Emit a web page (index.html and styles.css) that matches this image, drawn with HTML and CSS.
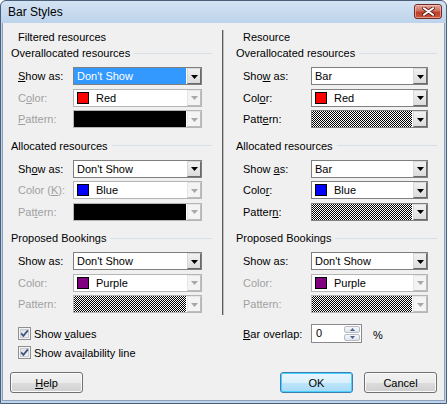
FILE: index.html
```html
<!DOCTYPE html>
<html>
<head>
<meta charset="utf-8">
<title>Bar Styles</title>
<link rel="stylesheet" href="styles.css">
</head>
<body>
<div class="window">
  <div class="titlebar">
    <span class="title">Bar Styles</span>
    <span class="close"><svg width="13" height="9" viewBox="0 0 13 9"><path d="M2 1.2 L11 7.8 M11 1.2 L2 7.8" stroke="#5b1b17" stroke-width="3.6" stroke-linecap="round"/><path d="M2 1.2 L11 7.8 M11 1.2 L2 7.8" stroke="#fff" stroke-width="2" stroke-linecap="round"/></svg></span>
  </div>
  <div class="client">
    <div class="columns">
      <div class="col col-left">
        <div class="col-title">Filtered resources</div>
        <div class="group">
          <div class="group-head"><span>Overallocated resources</span></div>
          <div class="row">
            <span class="lbl"><u>S</u>how as:</span>
            <div class="combo"><span class="val sel">Don't Show</span><span class="arrow"><svg width="7" height="4" viewBox="0 0 7 4"><polygon points="0,0 7,0 3.5,4"/></svg></span></div>
          </div>
          <div class="row">
            <span class="lbl dis">C<u>o</u>lor:</span>
            <div class="combo disabled"><span class="val"><span class="swatch red"></span>Red</span><span class="arrow"><svg width="7" height="4" viewBox="0 0 7 4"><polygon points="0,0 7,0 3.5,4"/></svg></span></div>
          </div>
          <div class="row">
            <span class="lbl dis"><u>P</u>attern:</span>
            <div class="combo disabled"><span class="val solid"></span><span class="arrow"><svg width="7" height="4" viewBox="0 0 7 4"><polygon points="0,0 7,0 3.5,4"/></svg></span></div>
          </div>
        </div>
        <div class="group">
          <div class="group-head"><span>Allocated resources</span></div>
          <div class="row">
            <span class="lbl">Sh<u>o</u>w as:</span>
            <div class="combo"><span class="val">Don't Show</span><span class="arrow"><svg width="7" height="4" viewBox="0 0 7 4"><polygon points="0,0 7,0 3.5,4"/></svg></span></div>
          </div>
          <div class="row">
            <span class="lbl dis">Color (<u>K</u>):</span>
            <div class="combo disabled"><span class="val"><span class="swatch blue"></span>Blue</span><span class="arrow"><svg width="7" height="4" viewBox="0 0 7 4"><polygon points="0,0 7,0 3.5,4"/></svg></span></div>
          </div>
          <div class="row">
            <span class="lbl dis">Pat<u>t</u>ern:</span>
            <div class="combo disabled"><span class="val solid"></span><span class="arrow"><svg width="7" height="4" viewBox="0 0 7 4"><polygon points="0,0 7,0 3.5,4"/></svg></span></div>
          </div>
        </div>
        <div class="group">
          <div class="group-head"><span>Proposed Bookings</span></div>
          <div class="row">
            <span class="lbl">Show as:</span>
            <div class="combo"><span class="val">Don't Show</span><span class="arrow"><svg width="7" height="4" viewBox="0 0 7 4"><polygon points="0,0 7,0 3.5,4"/></svg></span></div>
          </div>
          <div class="row">
            <span class="lbl dis">Color:</span>
            <div class="combo disabled"><span class="val"><span class="swatch purple"></span>Purple</span><span class="arrow"><svg width="7" height="4" viewBox="0 0 7 4"><polygon points="0,0 7,0 3.5,4"/></svg></span></div>
          </div>
          <div class="row">
            <span class="lbl dis">Pattern:</span>
            <div class="combo disabled"><span class="val checker"></span><span class="arrow"><svg width="7" height="4" viewBox="0 0 7 4"><polygon points="0,0 7,0 3.5,4"/></svg></span></div>
          </div>
        </div>
      </div>
      <div class="sep"></div>
      <div class="col col-right">
        <div class="col-title">Resource</div>
        <div class="group">
          <div class="group-head"><span>Overallocated resources</span></div>
          <div class="row">
            <span class="lbl">Sho<u>w</u> as:</span>
            <div class="combo"><span class="val">Bar</span><span class="arrow"><svg width="7" height="4" viewBox="0 0 7 4"><polygon points="0,0 7,0 3.5,4"/></svg></span></div>
          </div>
          <div class="row">
            <span class="lbl">Col<u>o</u>r:</span>
            <div class="combo"><span class="val"><span class="swatch red"></span>Red</span><span class="arrow"><svg width="7" height="4" viewBox="0 0 7 4"><polygon points="0,0 7,0 3.5,4"/></svg></span></div>
          </div>
          <div class="row">
            <span class="lbl">Patt<u>e</u>rn:</span>
            <div class="combo"><span class="val checker"></span><span class="arrow"><svg width="7" height="4" viewBox="0 0 7 4"><polygon points="0,0 7,0 3.5,4"/></svg></span></div>
          </div>
        </div>
        <div class="group">
          <div class="group-head"><span>Allocated resources</span></div>
          <div class="row">
            <span class="lbl">Show <u>a</u>s:</span>
            <div class="combo"><span class="val">Bar</span><span class="arrow"><svg width="7" height="4" viewBox="0 0 7 4"><polygon points="0,0 7,0 3.5,4"/></svg></span></div>
          </div>
          <div class="row">
            <span class="lbl">Colo<u>r</u>:</span>
            <div class="combo"><span class="val"><span class="swatch blue"></span>Blue</span><span class="arrow"><svg width="7" height="4" viewBox="0 0 7 4"><polygon points="0,0 7,0 3.5,4"/></svg></span></div>
          </div>
          <div class="row">
            <span class="lbl">Patter<u>n</u>:</span>
            <div class="combo"><span class="val checker"></span><span class="arrow"><svg width="7" height="4" viewBox="0 0 7 4"><polygon points="0,0 7,0 3.5,4"/></svg></span></div>
          </div>
        </div>
        <div class="group">
          <div class="group-head"><span>Proposed Bookings</span></div>
          <div class="row">
            <span class="lbl">Show as:</span>
            <div class="combo"><span class="val">Don't Show</span><span class="arrow"><svg width="7" height="4" viewBox="0 0 7 4"><polygon points="0,0 7,0 3.5,4"/></svg></span></div>
          </div>
          <div class="row">
            <span class="lbl dis">Color:</span>
            <div class="combo disabled"><span class="val"><span class="swatch purple"></span>Purple</span><span class="arrow"><svg width="7" height="4" viewBox="0 0 7 4"><polygon points="0,0 7,0 3.5,4"/></svg></span></div>
          </div>
          <div class="row">
            <span class="lbl dis">Pattern:</span>
            <div class="combo disabled"><span class="val checker"></span><span class="arrow"><svg width="7" height="4" viewBox="0 0 7 4"><polygon points="0,0 7,0 3.5,4"/></svg></span></div>
          </div>
        </div>
      </div>
    </div>
    <div class="lower">
      <div class="lower-left">
        <div class="check-row"><span class="checkbox"><svg width="13" height="13" viewBox="0 0 13 13"><path d="M3.2 6.4 L5.4 8.9 L9.9 3.4" fill="none" stroke="#3f5686" stroke-width="1.8"/></svg></span><span>Show <u>v</u>alues</span></div>
        <div class="check-row"><span class="checkbox"><svg width="13" height="13" viewBox="0 0 13 13"><path d="M3.2 6.4 L5.4 8.9 L9.9 3.4" fill="none" stroke="#3f5686" stroke-width="1.8"/></svg></span><span>Show ava<u>i</u>lability line</span></div>
      </div>
      <div class="lower-right">
        <span class="lbl"><u>B</u>ar overlap:</span>
        <div class="spinner">
          <span class="spin-val">0</span>
          <span class="spin-btns">
            <span class="spin-btn"><svg width="7" height="4" viewBox="0 0 7 4"><polygon points="0,4 7,4 3.5,0"/></svg></span>
            <span class="spin-btn"><svg width="7" height="4" viewBox="0 0 7 4"><polygon points="0,0 7,0 3.5,4"/></svg></span>
          </span>
        </div>
        <span class="pct">%</span>
      </div>
    </div>
    <div class="buttons">
      <span class="btn"><u>H</u>elp</span>
      <span class="btn-spacer"></span>
      <span class="btn default">OK</span>
      <span class="btn">Cancel</span>
    </div>
  </div>
</div>
</body>
</html>
```

FILE: styles.css
```css
html, body {
  margin: 0;
  padding: 0;
  background: #ffffff;
}

body {
  font-family: "Liberation Sans", Arial, sans-serif;
  font-size: 11px;
  color: #000;
}

.window {
  width: 447px;
  height: 404px;
  box-sizing: border-box;
  border: 1px solid #4a5f78;
  border-radius: 6px 6px 0 0;
  background: linear-gradient(#d3e3f3, #bcd3eb 22px, #bcd3eb);
  padding: 0 2px 2px;
  display: flex;
  flex-direction: column;
  overflow: hidden;
}

.titlebar {
  height: 22px;
  flex: none;
  display: flex;
  align-items: flex-start;
  justify-content: space-between;
  padding-left: 5px;
}

.title {
  font-size: 12px;
  line-height: 22px;
  color: #000;
}

.close {
  margin-top: 3px;
  margin-right: 2px;
  width: 28px;
  height: 15px;
  box-sizing: border-box;
  border: 1px solid #6e2a24;
  border-radius: 3px;
  background: linear-gradient(#e6a59b 0%, #d0705f 45%, #bd3f2b 55%, #c7553c 100%);
  box-shadow: inset 0 0 0 1px rgba(255, 210, 200, 0.55);
  display: flex;
  align-items: center;
  justify-content: center;
}

.close svg {
  display: block;
}

.client {
  flex: 1;
  background: #f0f0f0;
  border-left: 1px solid #8ba1bb;
  border-right: 1px solid #8ba1bb;
  border-bottom: 1px solid #8ba1bb;
  display: flex;
  flex-direction: column;
  margin: 0 -1px;
}

.columns {
  margin-top: 7px;
  display: flex;
}

.col-left {
  width: 219px;
  box-sizing: border-box;
  padding: 0 10px 2px 8px;
}

.col-right {
  width: 220px;
  box-sizing: border-box;
  padding: 0 7px 2px 12px;
}

.sep {
  width: 1px;
  background: #5c5c5c;
  border-right: 1px solid #bdbdbd;
}

.col-title {
  line-height: 14px;
  padding-left: 7px;
}

.group {
  margin-top: 10.5px;
}

.col-title + .group {
  margin-top: 2px;
}

.group-head {
  display: flex;
  align-items: center;
  line-height: 14px;
  margin-bottom: 7px;
}

.group-head::after {
  content: "";
  flex: 1;
  height: 1px;
  background: #d5dfe5;
  margin-left: 4px;
}

.row {
  display: flex;
  align-items: center;
  height: 18px;
  padding-left: 7px;
}

.row + .row {
  margin-top: 3.5px;
}

.lbl {
  line-height: 14px;
}

.col-left .lbl {
  width: 55px;
}

.col-right .lbl {
  width: 68px;
}

.dis {
  color: #a0a0a0;
}

.combo {
  height: 18px;
  box-sizing: border-box;
  border: 1px solid #7f7f7f;
  background: #fff;
  display: flex;
}

.col-left .combo {
  width: 129px;
}

.col-right .combo {
  width: 117px;
}

.combo.disabled {
  border-color: #b5b5b5;
}

.val {
  flex: 1;
  display: flex;
  align-items: center;
  padding-left: 3px;
  line-height: 16px;
  white-space: nowrap;
}

.val.sel {
  background: #3399ff;
  color: #fff;
}

.val.solid {
  background: #000;
  padding: 0;
}

.val.checker {
  padding: 0;
  background-color: #fff;
  background-image: conic-gradient(#000 0 25%, #fff 0 50%, #000 0 75%, #fff 0);
  background-size: 2px 2px;
}

.swatch {
  width: 12px;
  height: 12px;
  box-sizing: border-box;
  border: 1px solid #000;
  margin-right: 7px;
  flex: none;
}

.swatch.red { background: #ff0000; }
.swatch.blue { background: #0000ff; }
.swatch.purple { background: #800080; }

.arrow {
  width: 14px;
  flex: none;
  box-sizing: border-box;
  margin-left: 1px;
  border: 1px solid;
  border-color: #d8d8d8 #6a6a6a #6a6a6a #d8d8d8;
  background: linear-gradient(#f1f1f1, #dcdcdc);
  display: flex;
  align-items: center;
  justify-content: center;
  padding-top: 1px;
}

.arrow svg {
  display: block;
  fill: #000;
}

.disabled .arrow {
  border-color: #e6e6e6 #bdbdbd #bdbdbd #e6e6e6;
  background: #f4f4f4;
}

.disabled .arrow svg {
  fill: #a8a8a8;
}

.lower {
  display: flex;
  padding-top: 9px;
}

.lower-left {
  width: 221px;
  box-sizing: border-box;
  padding-left: 15px;
}

.check-row {
  height: 19px;
  display: flex;
  align-items: center;
}

.checkbox {
  width: 13px;
  height: 13px;
  box-sizing: border-box;
  border: 1px solid #8e8f8f;
  background: linear-gradient(135deg, #dcdcdc, #f6f6f6);
  box-shadow: inset 0 0 0 1px #f4f4f4, inset 0 0 0 2px #c8ccd2;
  margin-right: 3px;
  position: relative;
}

.checkbox svg {
  position: absolute;
  left: -1px;
  top: -1px;
}

.lower-right {
  display: flex;
  align-items: center;
  height: 19px;
  padding-left: 19px;
}

.lower-right .lbl {
  width: 68px;
}

.spinner {
  width: 51px;
  height: 19px;
  box-sizing: border-box;
  border: 1px solid #8a8a8a;
  background: #fff;
  display: flex;
}

.spin-val {
  flex: 1;
  padding-left: 4px;
  line-height: 17px;
}

.spin-btns {
  width: 16px;
  display: flex;
  flex-direction: column;
  padding: 1px 1px 1px 0;
  gap: 1px;
}

.spin-btn {
  flex: 1;
  box-sizing: border-box;
  border: 1px solid #b6bcc6;
  border-radius: 2px;
  background: linear-gradient(#f5f7fa, #dfe4ea);
  display: flex;
  align-items: center;
  justify-content: center;
}

.spin-btn svg {
  display: block;
  fill: #4d6185;
  width: 5px;
  height: 3px;
}

.pct {
  margin-left: 11px;
  line-height: 14px;
  padding-top: 2px;
}

.buttons {
  display: flex;
  margin-top: 10px;
  padding: 0 7px;
  gap: 11px;
}

.btn-spacer {
  flex: 1;
}

.btn {
  width: 73px;
  height: 21px;
  box-sizing: border-box;
  border: 1px solid #707070;
  border-radius: 3px;
  background: linear-gradient(#f2f2f2 0%, #ebebeb 50%, #dddddd 51%, #cfcfcf 100%);
  box-shadow: inset 0 0 0 1px #fbfbfb;
  display: flex;
  align-items: center;
  justify-content: center;
  line-height: 14px;
}

.btn.default {
  border-color: #3c7fb1;
  background: linear-gradient(#eaf6fd 0%, #d9f0fc 50%, #bee6fd 51%, #a7d9f5 100%);
  box-shadow: inset 0 0 0 1px #48d1ff;
}
```
